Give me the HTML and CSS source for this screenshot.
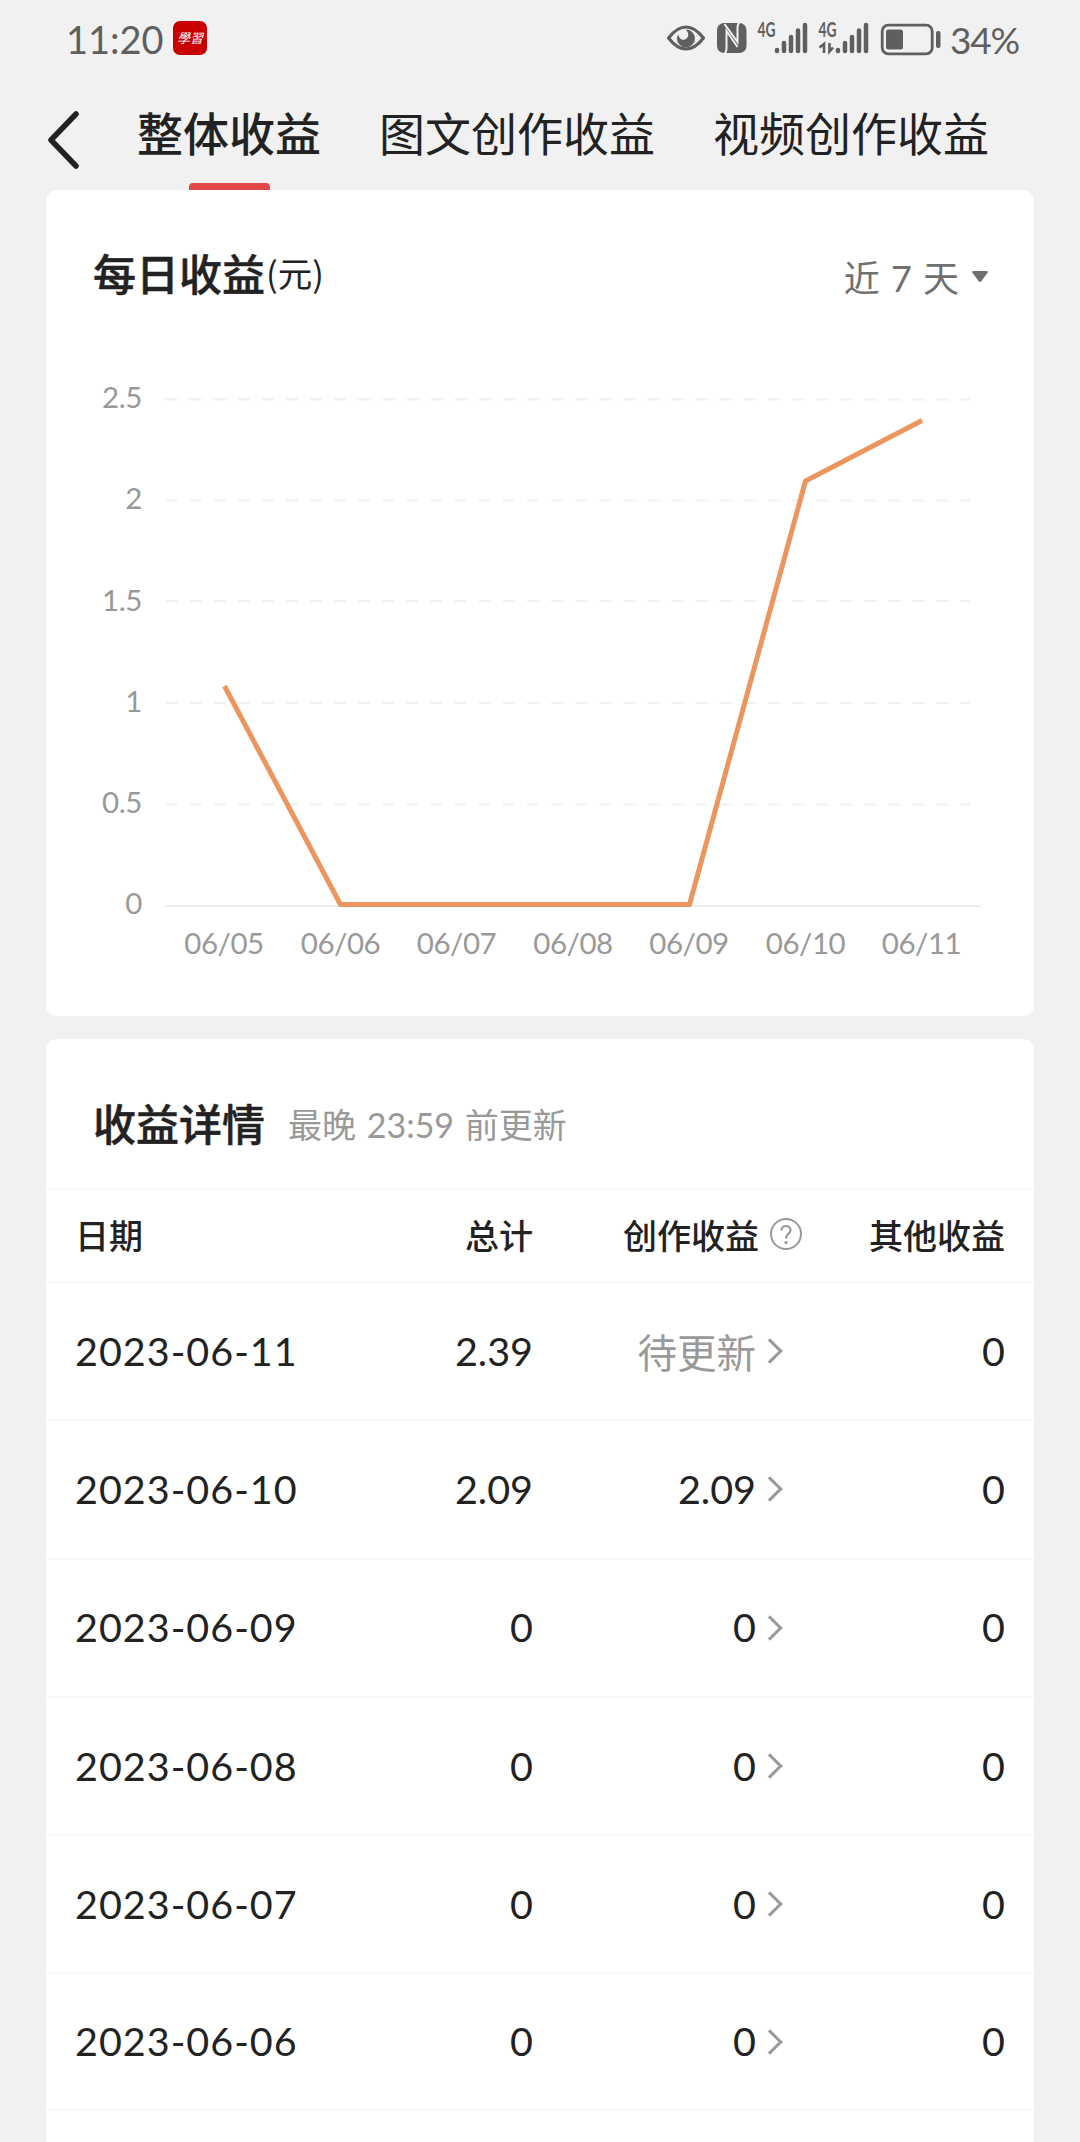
FILE: index.html
```html
<!DOCTYPE html>
<html lang="zh-CN">

<head>
  <meta charset="UTF-8">
  <meta name="viewport" content="width=device-width, initial-scale=1.0">
  <title>整体收益</title>
  <link rel="stylesheet" href="styles.css">
</head>

<body>

  <div class="status-bar">
    <span class="time">11:20</span>
    <span class="app-badge">學習</span>
    <!-- eye, nfc, signal, battery -->
    <svg class="status-icons" width="280" height="40" viewBox="662 16 280 40">
      <path d="M669.500 37Q678 26 687 26T704.500 37Q696 48 687 48T669.500 37Z" fill="none" stroke="#5f5f5f" stroke-width="3.200" stroke-linejoin="round" />
      <path d="M686.500 28.500A9 9 0 1 1 678 37C678 35.500 678.500 34.500 679.500 34C680 38 683 39.500 686 38.500C690 37 690.500 32 686.500 28.500Z" fill="#5f5f5f" />
      <rect x="718" y="22" width="29.500" height="30" rx="7" fill="#5f5f5f" />
      <path d="M725.500 52.500Q727.500 51 727.500 47V30L738.500 46" fill="none" stroke="#f1f1f1" stroke-width="2" />
      <path d="M740.500 21.500Q738.500 23 738.500 27V41L725.500 23" fill="none" stroke="#f1f1f1" stroke-width="2" />
      <g class="net">
        <text x="758.500" y="36" textLength="18" lengthAdjust="spacingAndGlyphs">4G</text>
        <text x="819.500" y="36" textLength="18" lengthAdjust="spacingAndGlyphs">4G</text>
      </g>
      <g class="bars">
        <path d="M778 49V50M785 42V50M792 36V50M799 29.500V50M806 24V50" />
        <path d="M839 49V50M846 42V50M853 36V50M860 29.500V50M867 24V50" />
      </g>
      <path d="M820.500 46.500L825 43V52M830.500 42V50.500L834 46.500" fill="none" stroke="#5f5f5f" stroke-width="2.600" />
      <rect x="883.200" y="24.200" width="50" height="28.600" rx="6" fill="none" stroke="#5f5f5f" stroke-width="2.800" />
      <rect x="887" y="28.500" width="17" height="20" rx="2.500" fill="#5f5f5f" />
      <rect x="937" y="30" width="4.500" height="17" rx="2" fill="#5f5f5f" />
    </svg>
    <span class="battery-text">34%</span>
  </div>

  <div class="nav">
    <svg class="back" width="34" height="62" viewBox="0 0 34 62">
      <path d="M31 5L6 31L31 57" fill="none" stroke="#222" stroke-width="5.500" stroke-linecap="round" stroke-linejoin="round" />
    </svg>
    <div class="tab active">整体收益</div>
    <div class="tab">图文创作收益</div>
    <div class="tab">视频创作收益</div>
  </div>

  <div class="card chart-card">
    <div class="card-head">
      <h2>每日收益<span class="unit">(元)</span></h2>
      <div class="range">
        近 7 天
        <svg width="16" height="11" viewBox="0 0 16 11"><path d="M2 0H14Q17 0 15 2.500L9.500 10Q8 12 6.500 10L1 2.500Q-1 0 2 0Z" fill="#707070" /></svg>
      </div>
    </div>
    <svg class="chart" width="988" height="620" viewBox="46 370 988 620">
      <g class="grid-lines">
        <path d="M165.500 399.500H970M165.500 500.500H970M165.500 601H970M165.500 703H970M165.500 804.500H970" />
      </g>
      <path class="axis" d="M165 906H981" />
      <g class="y-labels">
        <text x="142" y="408">2.5</text>
        <text x="142" y="509">2</text>
        <text x="142" y="611">1.5</text>
        <text x="142" y="712">1</text>
        <text x="142" y="813">0.5</text>
        <text x="142" y="914">0</text>
      </g>
      <g class="x-labels">
        <text x="224" y="953.500">06/05</text>
        <text x="340.500" y="953.500">06/06</text>
        <text x="456.500" y="953.500">06/07</text>
        <text x="573" y="953.500">06/08</text>
        <text x="689" y="953.500">06/09</text>
        <text x="805.500" y="953.500">06/10</text>
        <text x="921.500" y="953.500">06/11</text>
      </g>
      <polyline class="line" points="224.500,686 340.500,904.500 689.500,904.500 805.500,481 922,420.500" />
    </svg>
  </div>

  <div class="card detail-card">
    <div class="detail-head">
      <h2>收益详情</h2>
      <span class="hint">最晚 23:59 前更新</span>
    </div>
    <div class="row row-head">
      <div>日期</div>
      <div class="total">总计</div>
      <div class="create">创作收益
        <svg width="32" height="32" viewBox="0 0 32 32">
          <circle cx="16" cy="16" r="15" fill="none" stroke="#999" stroke-width="2" />
          <path d="M11.500 12.500C11.500 6.500 20.500 6.500 20.500 12.500C20.500 15.500 16 16 16 20.500" fill="none" stroke="#999" stroke-width="2.200" />
          <circle cx="16" cy="24.500" r="1.600" fill="#999" />
        </svg>
      </div>
      <div class="other">其他收益</div>
    </div>
    <div class="row">
      <div class="date">2023-06-11</div>
      <div class="total">2.39</div>
      <div class="create pending">待更新<i class="arrow"></i></div>
      <div class="other">0</div>
    </div>
    <div class="row">
      <div class="date">2023-06-10</div>
      <div class="total">2.09</div>
      <div class="create">2.09<i class="arrow"></i></div>
      <div class="other">0</div>
    </div>
    <div class="row">
      <div class="date">2023-06-09</div>
      <div class="total">0</div>
      <div class="create">0<i class="arrow"></i></div>
      <div class="other">0</div>
    </div>
    <div class="row">
      <div class="date">2023-06-08</div>
      <div class="total">0</div>
      <div class="create">0<i class="arrow"></i></div>
      <div class="other">0</div>
    </div>
    <div class="row">
      <div class="date">2023-06-07</div>
      <div class="total">0</div>
      <div class="create">0<i class="arrow"></i></div>
      <div class="other">0</div>
    </div>
    <div class="row">
      <div class="date">2023-06-06</div>
      <div class="total">0</div>
      <div class="create">0<i class="arrow"></i></div>
      <div class="other">0</div>
    </div>
  </div>

</body>

</html>
```
FILE: styles.css
```css
* {
  box-sizing: border-box;
}

body {
  margin: 0;
  width: 1080px;
  height: 2142px;
  overflow: hidden;
  background: #f1f1f1;
  color: #222;
  font-family: Lato, "Noto Sans CJK SC", sans-serif;
}

h2 {
  margin: 0;
  font-size: 43px;
  font-weight: 500;
  line-height: 60px;
  font-family: "Noto Sans CJK SC", sans-serif;
  -webkit-text-stroke: 0.5px #222;
}

.status-bar {
  height: 80px;
  padding: 0 61px 4px 66px;
  display: flex;
  align-items: center;
  color: #5f5f5f;
  font-size: 38px;
}

.time {
  width: 107px;
  padding-top: 1px;
}

.app-badge {
  width: 34px;
  height: 34px;
  border-radius: 7px;
  background: #c80000;
  color: white;
  font-family: "Noto Sans CJK SC", sans-serif;
  font-size: 13px;
  font-style: italic;
  line-height: 34px;
  text-align: center;
}

.status-icons {
  margin-left: auto;
  margin-top: -3px;
}

.net {
  fill: #5f5f5f;
  font-size: 20px;
  font-weight: 700;
}

.bars {
  stroke: #5f5f5f;
  stroke-width: 4.5;
  stroke-linecap: round;
}

.battery-text {
  width: 69px;
  margin-left: 9px;
  padding-top: 2px;
  font-size: 37px;
  letter-spacing: -1.2px;
  white-space: nowrap;
}

.nav {
  height: 110px;
  padding-left: 45px;
  display: flex;
}

.back {
  margin: 29px 58px 0 0;
}

.tab {
  margin-right: 58px;
  height: 110px;
  font-size: 46px;
  line-height: 108px;
}

.active {
  display: flex;
  flex-direction: column;
  align-items: center;
  font-weight: 500;
}

.active::after {
  content: "";
  width: 81px;
  height: 7px;
  margin-top: -5px;
  flex-shrink: 0;
  border-radius: 4px 4px 0 0;
  background: #e34848;
}

.card {
  width: 988px;
  margin: 0 auto;
  background: white;
  border-radius: 11px;
}

.chart-card {
  height: 826px;
}

.card-head {
  height: 180px;
  padding: 52px 46px 0 47px;
  display: flex;
  justify-content: space-between;
}

.unit {
  margin-left: 1px;
  font-size: 34.5px;
  font-weight: 400;
  -webkit-text-stroke: 0;
  vertical-align: 4px;
}

.range {
  display: flex;
  align-items: center;
  gap: 13px;
  height: 68px;
  color: #707070;
  font-size: 36px;
  word-spacing: 2px;
}

.chart {
  display: block;
}

.grid-lines {
  stroke: #f0f0f0;
  stroke-width: 2;
  stroke-dasharray: 12 12.1;
}

.axis {
  stroke: #eee;
  stroke-width: 2;
}

.y-labels,
.x-labels {
  fill: #999;
  font-size: 29.5px;
}

.y-labels {
  text-anchor: end;
  letter-spacing: -0.4px;
}

.x-labels {
  text-anchor: middle;
  letter-spacing: -0.5px;
}

.line {
  fill: none;
  stroke: #ec965f;
  stroke-width: 5;
  stroke-linejoin: round;
}

.detail-card {
  height: 1120px;
  margin-top: 23px;
}

.detail-head {
  height: 148.5px;
  padding: 17px 0 0 47px;
  display: flex;
  align-items: center;
  gap: 23px;
}

.hint {
  padding-top: 3px;
  color: #999;
  font-size: 34px;
  word-spacing: 2px;
}

.row {
  height: 138.3px;
  padding: 0 29px 2px;
  display: grid;
  grid-template-columns: 230px 228px 254px 1fr;
  align-items: center;
  border-top: 2px solid #f8f8f8;
  font-size: 39.5px;
}

.row:last-child {
  border-bottom: 2px solid #f8f8f8;
}

.row-head {
  height: 93.5px;
  font-size: 34px;
  font-weight: 500;
}

.date {
  letter-spacing: 1px;
  white-space: nowrap;
}

.total,
.other {
  text-align: right;
}

.create {
  display: flex;
  align-items: center;
  justify-content: flex-end;
}

.row-head .create {
  margin-right: -15px;
  gap: 11px;
}

.pending {
  color: #999;
}

.arrow {
  width: 18px;
  height: 18px;
  margin: 2px 8px 0 5px;
  border-top: 3.5px solid #999;
  border-right: 3.5px solid #999;
  transform: rotate(45deg);
}
```
